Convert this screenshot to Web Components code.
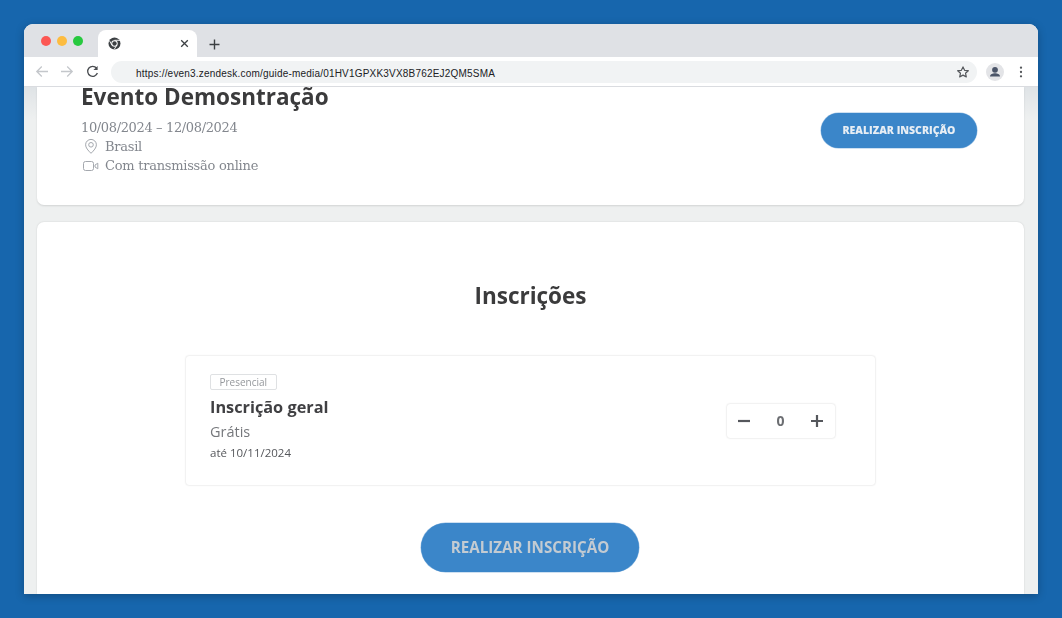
<!DOCTYPE html>
<html lang="pt"><head><meta charset="utf-8"><title>Evento</title>
<style>html,body{margin:0;height:100%}body{width:1062px;height:618px;overflow:hidden;background:#1766ad;box-sizing:border-box;padding:24px}</style>
</head><body>
<browser-window>
  <event-card></event-card>
  <tickets-card></tickets-card>
</browser-window>
<script>
class Base extends HTMLElement{
  constructor(){super();this.attachShadow({mode:'open'}).innerHTML=this.constructor.html}
}
const ico=(w,h,vb,inner,extra='')=>`<svg width="${w}" height="${h}" viewBox="${vb}" fill="none" ${extra}>${inner}</svg>`;
customElements.define('browser-window',class extends Base{static html=`<style>
:host{display:flex;flex-direction:column;width:1014px;height:570px;border-radius:9px 9px 0 0;overflow:hidden;background:#fff;box-shadow:0 2px 8px rgba(0,0,0,.25);font-family:"Liberation Sans",Arial,sans-serif}
.strip{height:33px;flex:none;background:#dfe1e5;display:flex;align-items:flex-end}
.dots{display:flex;gap:6px;padding:0 0 11px 16.5px;align-self:flex-end}
.dots i{width:10px;height:10px;border-radius:50%}
.tab{margin-left:15px;width:99px;height:27px;background:#fff;border-radius:8px 8px 0 0;display:flex;align-items:center;justify-content:space-between;padding:0 8px 0 10px;box-sizing:border-box}
.tab svg{display:block}
.plus{margin:0 0 7px 12px;display:block}
.bar{height:29px;flex:none;background:#fff;border-bottom:1px solid #dadce0;display:flex;align-items:center;box-sizing:content-box}
.nav{display:flex;align-items:center;gap:9px;padding-left:11px}
.nav svg:last-child{margin-left:3px}
.url{margin-left:12px;width:866px;height:22px;border-radius:11px;background:#f1f3f4;display:flex;align-items:center;justify-content:space-between;padding:0 7px 0 25px;box-sizing:border-box;font-size:10px;color:#202124;letter-spacing:.02em}
.url span{padding-top:3px}
.end{display:flex;align-items:center;margin-left:9px;gap:15px}
.page{flex:1;min-height:0;overflow:hidden;background:linear-gradient(#dfe3e6,#eef0f0 32px);padding:0 14px 0 13px;display:flex;flex-direction:column;gap:17px;filter:blur(.45px)}
</style>
<div class="strip">
  <div class="dots"><i style="background:#fc5753"></i><i style="background:#fdbc40"></i><i style="background:#27c93f"></i></div>
  <div class="tab">
    ${ico(13,13,'0 0 13 13','<circle cx="6.5" cy="6.5" r="6" fill="#3c4043"/><circle cx="6.5" cy="6.5" r="3.2" fill="#fff"/><circle cx="6.5" cy="6.5" r="2.2" fill="#3c4043"/><path d="M6.5 3.3H12M4 8.2 1.4 3.6M8.9 8 6.2 12.4" stroke="#fff" stroke-width=".9"/>')}
    ${ico(9,9,'0 0 9 9','<path d="M1.2 1.2 7.8 7.8M7.8 1.2 1.2 7.8" stroke="#3c4043" stroke-width="1.3"/>')}
  </div>
  ${ico(11,11,'0 0 11 11','<path d="M5.5 .5v10M.5 5.5h10" stroke="#3c4043" stroke-width="1.4"/>','class="plus"')}
</div>
<div class="bar">
  <div class="nav">
    ${ico(15,13,'0 0 15 13','<path d="M13 6.5H2M6.8 1.5 1.8 6.5l5 5" stroke="#c4c7cb" stroke-width="1.3"/>')}
    ${ico(15,13,'0 0 15 13','<path d="M2 6.5h11M8.2 1.5l5 5-5 5" stroke="#c4c7cb" stroke-width="1.3"/>')}
    ${ico(13,13,'0 0 13 13','<path d="M10.6 3.2A5 5 0 1 0 11.4 8" stroke="#4a4d51" stroke-width="1.3"/><path d="M11.6 .9v4.2H7.4z" fill="#4a4d51"/>')}
  </div>
  <div class="url"><span>https://even3.zendesk.com/guide-media/01HV1GPXK3VX8B762EJ2QM5SMA</span>
    ${ico(14,14,'0 0 14 14','<path d="m7 1.9 1.6 3.4 3.7.4-2.8 2.5.8 3.7L7 10.1l-3.3 1.8.8-3.7L1.7 5.7l3.7-.4z" stroke="#55585c" stroke-width="1.2" stroke-linejoin="round"/>')}
  </div>
  <div class="end">
    ${ico(18,18,'0 0 18 18','<circle cx="9" cy="9" r="9" fill="#e3e4e7"/><circle cx="9" cy="6.8" r="2.9" fill="#4a5468"/><path d="M4 13.6c0-2.2 2.6-3.3 5-3.3s5 1.100 5 3.300z" fill="#4a5468"/>')}
    ${ico(4,12,'0 0 4 12','<circle cx="2" cy="1.700" r="1.150" fill="#55585c"/><circle cx="2" cy="6" r="1.150" fill="#55585c"/><circle cx="2" cy="10.300" r="1.150" fill="#55585c"/>')}
  </div>
</div>
<div class="page"><slot></slot></div>`});
customElements.define('event-card',class extends Base{static html=`<style>
:host{display:flex;flex:none;height:118px;background:#fff;border-radius:0 0 7px 7px;box-shadow:0 1px 2px rgba(0,0,0,.12);padding:0 47px 0 44px;justify-content:space-between;align-items:flex-start;box-sizing:border-box}
h1{margin:-4px 0 0;font:700 22.500px/27px "Open Sans",sans-serif;color:#3b3b3c}
.m{font:13px/19.500px "DejaVu Serif",serif;color:#83878e;letter-spacing:-.36px}
.d{margin:8px 0 -1px}
.r{display:flex;align-items:center;gap:5px;padding-left:1px}
.r span{letter-spacing:-.25px}
svg{display:block;flex:none}
.btn{margin-top:26px}
</style>
<div><h1>Evento Demosntração</h1>
<div class="m d">10/08/2024 – 12/08/2024</div>
<div class="m r">${ico(18,18,'0 0 18 18','<path d="M9 16.300C6 13.400 3.600 10.700 3.600 7.800a5.400 5.400 0 0 1 10.800 0c0 2.900-2.400 5.600-5.400 8.500z" stroke="#a4a8ae" stroke-width="1"/><circle cx="9" cy="7.800" r="2.300" stroke="#a4a8ae" stroke-width="1"/>')}<span>Brasil</span></div>
<div class="m r">${ico(18,18,'0 0 18 18','<rect x="1.500" y="4.500" width="10" height="9" rx="2" stroke="#a4a8ae" stroke-width="1"/><path d="M13 8l2.800-1.800v5.600L13 10z" stroke="#a4a8ae" stroke-width="1"/>')}<span>Com transmissão online</span></div></div>
<action-button class="btn" small>REALIZAR INSCRIÇÃO</action-button>`});
customElements.define('action-button',class extends Base{static html=`<style>
:host{display:flex;align-items:center;justify-content:center;background:#3b86c9;border-radius:999px;width:156px;height:35px;color:#e8eef4;font:800 10.500px/1 "Open Sans",sans-serif;white-space:nowrap;box-shadow:0 0 0 .5px rgba(59,134,201,.5)}
:host([big]){width:218px;height:49px;font-size:15.200px;font-weight:700;color:#c3cbd2;margin-right:1px}
</style><slot></slot>`});
customElements.define('tickets-card',class extends Base{static html=`<style>
:host{display:flex;flex-direction:column;align-items:center;flex:1;min-height:0;background:#fff;border-radius:7px 7px 0 0;box-shadow:0 0 2px rgba(0,0,0,.14);font-family:"Open Sans",sans-serif}
h2{margin:58px 0 0;font:700 22.500px/32px "Open Sans",sans-serif;color:#3b3b3c}
.ticket{margin-top:44px;width:689px;height:129px;box-sizing:border-box;border-radius:3px;box-shadow:0 0 2px rgba(0,0,0,.2);padding:18px 40px 0 24px;display:flex;justify-content:space-between;align-items:flex-start}
.tag{display:block;width:fit-content;border:1px solid #dfe1e3;border-radius:2px;font-size:10px;line-height:14px;padding:0 8.500px;color:#94979b}
.name{font:700 16.300px/22px "Open Sans",sans-serif;color:#404043;margin-top:6px}
.price{font-size:14.500px;line-height:20px;color:#76787c;margin-top:4px}
.until{font-size:11.500px;line-height:15px;color:#55575b;margin-top:3px}
.qty{margin-top:30px;width:108px;height:34px;box-sizing:border-box;border-radius:3px;box-shadow:0 0 2px rgba(0,0,0,.2);display:flex;align-items:center;justify-content:space-between;padding:0 12px 0 11px;font:700 14px/1 "Open Sans",sans-serif;color:#6c6e72}
action-button{margin-top:38px;flex:none}
</style>
<h2>Inscrições</h2>
<div class="ticket"><div><span class="tag">Presencial</span>
<div class="name">Inscrição geral</div><div class="price">Grátis</div><div class="until">até 10/11/2024</div></div>
<div class="qty">${ico(12,12,'0 0 12 12','<path d="M0 6h12" stroke="#55575c" stroke-width="2.200"/>')}<span>0</span>${ico(12,12,'0 0 12 12','<path d="M0 6h12M6 0v12" stroke="#55575c" stroke-width="2.200"/>')}</div></div>
<action-button big>REALIZAR INSCRIÇÃO</action-button>`});
</script>
</body></html>
